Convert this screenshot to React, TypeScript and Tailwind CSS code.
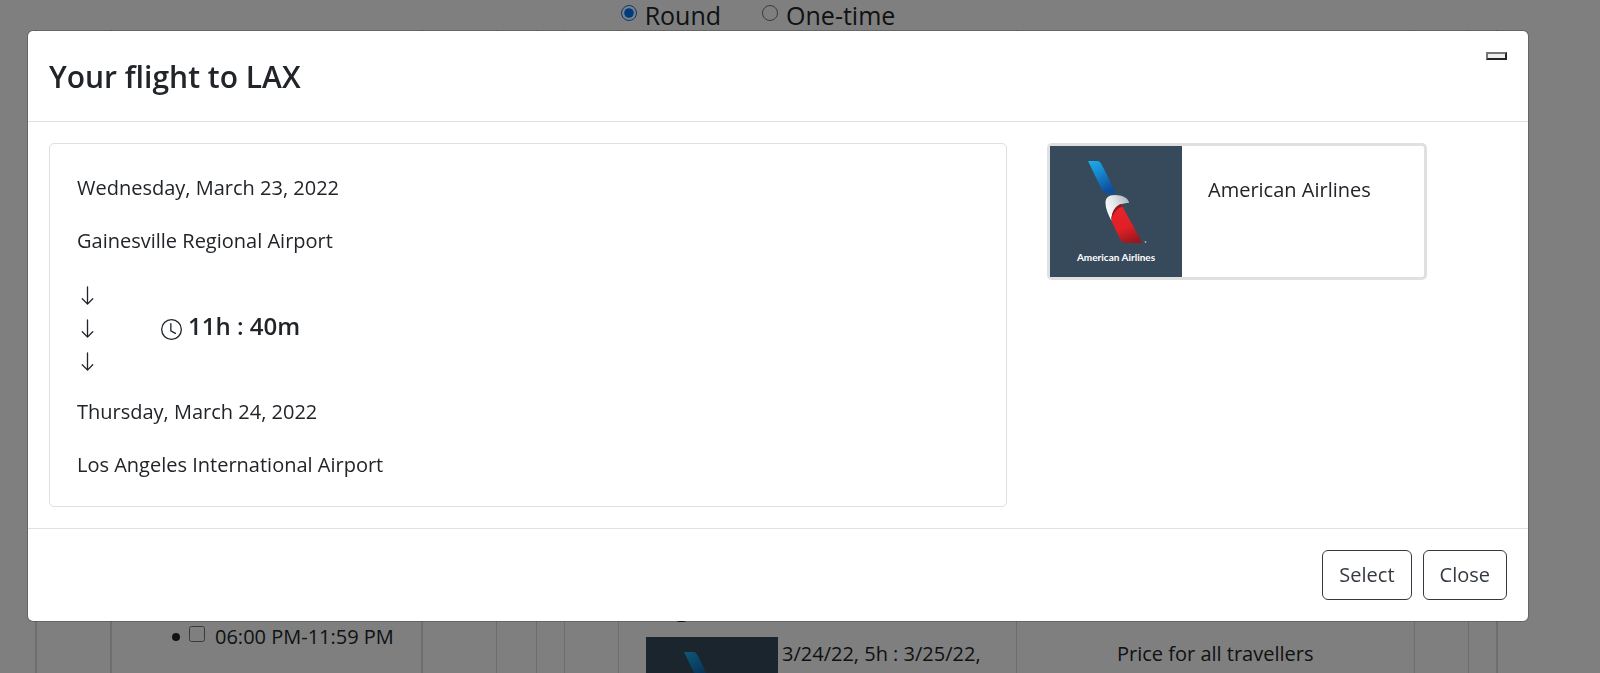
import React from "react";

function AirlineLogo({ id, wordmark = false }: { id: string; wordmark?: boolean }) {
  const blue = `${id}-blue`;
  const silver = `${id}-silver`;
  const red = `${id}-red`;
  return (
    <svg viewBox="0 0 132 131" className="block h-[131px] w-[132px] shrink-0" role="img" aria-label="American Airlines logo">
      <defs>
        <linearGradient id={blue} x1="0" y1="0" x2="0.5" y2="1">
          <stop offset="0" stopColor="#1cb0ea" />
          <stop offset="0.5" stopColor="#1583cb" />
          <stop offset="1" stopColor="#0d4f9e" />
        </linearGradient>
        <linearGradient id={silver} x1="0" y1="0.7" x2="1" y2="0.2">
          <stop offset="0" stopColor="#ffffff" />
          <stop offset="0.45" stopColor="#e3e7ea" />
          <stop offset="1" stopColor="#a9b4bd" />
        </linearGradient>
        <linearGradient id={red} x1="0.3" y1="0" x2="0.6" y2="1">
          <stop offset="0" stopColor="#e8242b" />
          <stop offset="0.6" stopColor="#e01f27" />
          <stop offset="1" stopColor="#98191d" />
        </linearGradient>
      </defs>
      <rect width="132" height="131" fill="#374a5b" />
      <path d="M38 15h9c3 0 4 2 5.500 5L66 47.500c-5 1-12 1-14.500-4.500z" fill={`url(#${blue})`} />
      <path d="M79 57c0-5-7-8-14-8-7 0-9.500 3-9.500 8 0 6 3 12 6 18 0-9 4-14 9-16.500 3-1 5-1.500 8.500-1.500z" fill={`url(#${silver})`} />
      <path d="M71 58l21.500 39H78c-5 0-7-1.500-9-6l-7.500-16C61 67 65 60 71 58z" fill={`url(#${red})`} />
      <path d="M71 58l1.500 3c-5 .5-8.500 5-11 12C62 66 65 60 71 58z" fill="#8c1a1e" />
      <circle cx="95.500" cy="96" r="0.900" fill="#aab4bc" />
      {wordmark && (
        <text x="66" y="115" textAnchor="middle" fill="#ffffff" className="font-['Lato',sans-serif] text-[10px] font-bold">
          American Airlines
        </text>
      )}
    </svg>
  );
}

function ArrowDown() {
  return (
    <svg viewBox="0 0 16 16" fill="currentColor" className="block size-[21px]" aria-hidden="true">
      <path
        fillRule="evenodd"
        d="M8 1a.5.5 0 0 1 .5.5v11.793l3.146-3.147a.5.5 0 0 1 .708.708l-4 4a.5.5 0 0 1-.708 0l-4-4a.5.5 0 0 1 .708-.708L7.500 13.293V1.500A.5.5 0 0 1 8 1z"
      />
    </svg>
  );
}

function Clock() {
  return (
    <svg viewBox="0 0 16 16" fill="currentColor" className="mt-2 block size-[21px]" aria-hidden="true">
      <path d="M8 3.500a.5.5 0 0 0-1 0V9a.5.5 0 0 0 .252.434l3.500 2a.5.5 0 0 0 .496-.868L8 8.710V3.500z" />
      <path d="M8 16A8 8 0 1 0 8 0a8 8 0 0 0 0 16zm7-8A7 7 0 1 1 1 8a7 7 0 0 1 14 0z" />
    </svg>
  );
}

function SearchPage() {
  return (
    <div className="flex h-screen flex-col overflow-hidden">
      <div className="flex h-8 justify-center gap-[41px] pr-[84px] text-[25px] leading-[30px]">
        <label className="flex gap-2">
          <input type="radio" name="trip" defaultChecked className="mt-[5px] size-4" />
          Round
        </label>
        <label className="flex gap-2">
          <input type="radio" name="trip" className="mt-[5px] size-4" />
          One-time
        </label>
      </div>
      <main className="ml-[35px] mr-[102px] flex flex-1 gap-[39px]">
        <aside className="w-[462px] shrink-0 border-l-2 border-r border-[#dcdcdc] pl-[73px] pr-[73px]">
          <div className="h-full border-x-2 border-[#dcdcdc] pt-[591px]">
            <ul className="pl-[77px]">
              <li className="relative flex h-8 items-center">
                <span className="absolute -left-[17px] size-2 rounded-full bg-[#212529]" aria-hidden="true" />
                <label className="flex leading-8">
                  <input type="checkbox" className="mt-[5px] mr-[10px] size-4" />
                  06:00 PM-11:59 PM
                </label>
              </li>
            </ul>
          </div>
        </aside>
        <section className="flex flex-1 border-l border-r-2 border-[#dcdcdc] pl-[27px] pr-[27px]">
          <div className="flex flex-1 border-x border-[#dcdcdc] px-[53px]">
            <div className="grid flex-1 grid-cols-2 border-x border-[#dcdcdc]">
              <div className="border-r border-[#dcdcdc] pl-[27px] pt-[560px]">
                <h2 className="mb-[15px] text-[25px] font-bold leading-8">Flight</h2>
                <div className="flex gap-1">
                  <AirlineLogo id="result" />
                  <p className="leading-[34px]">3/24/22, 5h : 3/25/22,</p>
                </div>
              </div>
              <p className="pt-[607px] text-center leading-[34px]">Price for all travellers</p>
            </div>
          </div>
        </section>
      </main>
    </div>
  );
}

export default function App() {
  return (
    <div className="bg-white font-['Open_Sans',sans-serif] text-[20px] text-[#212529]">
      <SearchPage />
      <div className="fixed inset-0 overflow-hidden bg-black/50">
        <div
          role="dialog"
          aria-labelledby="flight-title"
          className="ml-[27px] mr-[71px] mt-[30px] rounded-md border border-black/20 bg-white bg-clip-padding"
        >
          <header className="flex items-start justify-between border-b border-[#dee2e6] p-[21px]">
            <h1 id="flight-title" className="pt-[2px] text-[30px] font-semibold leading-[46px]">
              Your flight to LAX
            </h1>
            <button
              type="button"
              aria-label="Dismiss"
              className="h-2 w-[21px] border-2 border-b-[#212529] border-l-[#767676] border-r-[#212529] border-t-[#767676] bg-[#efefef]"
            />
          </header>
          <div className="grid grid-cols-[minmax(0,958fr)_minmax(0,500fr)] items-start p-[21px]">
            <section className="rounded-[5px] border border-[#dfdfdf] px-[27px] pb-[25px] pt-7 leading-8">
              <p className="mb-[21px]">Wednesday, March 23, 2022</p>
              <p>Gainesville Regional Airport</p>
              <div className="flex items-center gap-[63px] pb-6 pt-7">
                <div className="flex flex-col gap-3">
                  <ArrowDown />
                  <ArrowDown />
                  <ArrowDown />
                </div>
                <div className="flex items-center gap-[6px] pb-[6px]">
                  <Clock />
                  <span className="text-[24px] font-semibold">11h : 40m</span>
                </div>
              </div>
              <p className="mb-[21px]">Thursday, March 24, 2022</p>
              <p>Los Angeles International Airport</p>
            </section>
            <div className="pl-10">
              <div className="flex max-w-[380px] rounded-[5px] border-[3px] border-[#e0e0e0]">
                <AirlineLogo id="carrier" wordmark />
                <p className="pl-[26px] pt-7 leading-8">American Airlines</p>
              </div>
            </div>
          </div>
          <footer className="flex justify-end gap-[11px] border-t border-[#dee2e6] p-[21px]">
            <button type="button" className="h-[50px] rounded-md border border-[#343a40] px-4 text-[#343a40]">
              Select
            </button>
            <button type="button" className="h-[50px] rounded-md border border-[#343a40] px-4 text-[#343a40]">
              Close
            </button>
          </footer>
        </div>
      </div>
    </div>
  );
}
